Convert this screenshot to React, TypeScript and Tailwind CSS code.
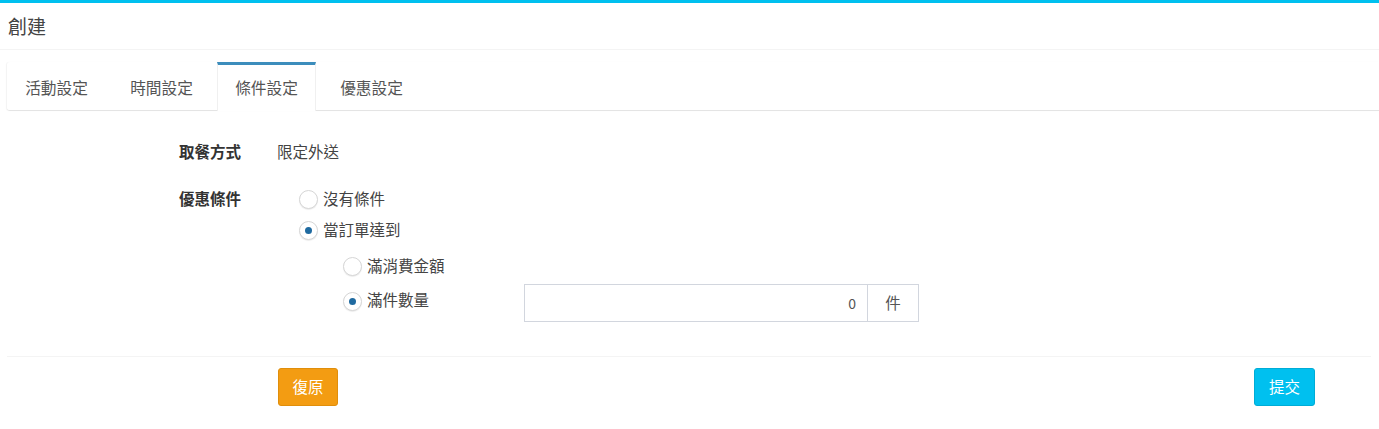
import React from "react";

const font = { fontFamily: '"Noto Sans CJK TC", "Liberation Sans", sans-serif' };

function Radio({ checked }: { checked?: boolean }) {
  return (
    <span className="flex h-[19px] w-[19px] shrink-0 items-center justify-center rounded-full border border-[#d6d6d6] bg-white shadow-[0_1px_1px_rgba(0,0,0,0.08)]">
      {checked && <span className="h-[7px] w-[7px] rounded-full bg-[#1f6aa0]" />}
    </span>
  );
}

export default function App() {
  const tabs = ["活動設定", "時間設定", "條件設定", "優惠設定"];
  return (
    <div style={font} className="w-full bg-white text-[#333] border-t-[3px] border-[#00c0ef]">
      <div className="flex h-[47px] items-center border-b border-[#f4f4f4] px-2 text-[19px] text-[#444]">
        創建
      </div>
      <div className="pl-[7px] pt-3">
        <div className="flex h-[49px] rounded-l-[3px] border-b border-[#e4e4e4] shadow-[-1px_0_1px_rgba(0,0,0,0.05)]">
          {tabs.map((t, i) => {
            const active = i === 2;
            return (
              <div
                key={t}
                className={
                  "mr-[6px] flex w-[99px] items-center justify-center text-[15.7px] " +
                  (active
                    ? "mb-[-1px] border-t-[3px] border-x border-x-[#f0f0f0] border-t-[#3c8dbc] bg-white pb-[1px] text-[#555]"
                    : "border-t-[3px] border-t-transparent text-[#555]")
                }
              >
                {t}
              </div>
            );
          })}
        </div>
        <div className="pt-[31px] text-[15.5px]">
          <div className="flex h-5 items-center">
            <div className="w-[98px] pl-[172px] box-content font-semibold text-[#333]">取餐方式</div>
            <div className="text-[#444]">限定外送</div>
          </div>
          <div className="mt-[25px] flex">
            <div className="w-[120px] pl-[172px] box-content pt-[1px] font-semibold leading-5">優惠條件</div>
            <div className="flex flex-col">
              <div className="flex h-5 items-center gap-[5px] text-[#444]" style={{ marginTop: 2 }}>
                <Radio />
                <span>沒有條件</span>
              </div>
              <div className="mt-[11px] flex h-5 items-center gap-[5px] text-[#444]">
                <Radio checked />
                <span>當訂單達到</span>
              </div>
              <div className="ml-[44px] mt-[16px] flex h-5 items-center gap-[5px] text-[#444]">
                <Radio />
                <span>滿消費金額</span>
              </div>
              <div className="ml-[44px] mt-[8px] flex items-start">
                <div className="mt-[7px] flex h-5 w-[181px] items-center gap-[5px] text-[#444]">
                  <Radio checked />
                  <span className="-mt-[3px]">滿件數量</span>
                </div>
                <div className="flex h-[38px] w-[395px] border border-[#d2d6de]">
                  <div className="flex flex-1 items-center justify-end pr-[11px] text-[14px] text-[#555]">0</div>
                  <div className="flex w-[51px] items-center justify-center border-l border-[#d2d6de] text-[#555]">件</div>
                </div>
              </div>
            </div>
          </div>
        </div>
        <div className="mt-[34px] mr-[8px] border-t border-[#f4f4f4]" />
        <div className="flex justify-between pb-[20px] pl-[271px] pr-[64px] pt-[11px]">
          <button className="flex h-[38px] w-[60px] items-center justify-center rounded-[3px] border border-[#e08e0b] bg-[#f39c12] text-[15.5px] text-white">
            復原
          </button>
          <button className="flex h-[38px] w-[61px] items-center justify-center rounded-[3px] border border-[#00acd6] bg-[#00c0ef] text-[15.5px] text-white">
            提交
          </button>
        </div>
      </div>
    </div>
  );
}
